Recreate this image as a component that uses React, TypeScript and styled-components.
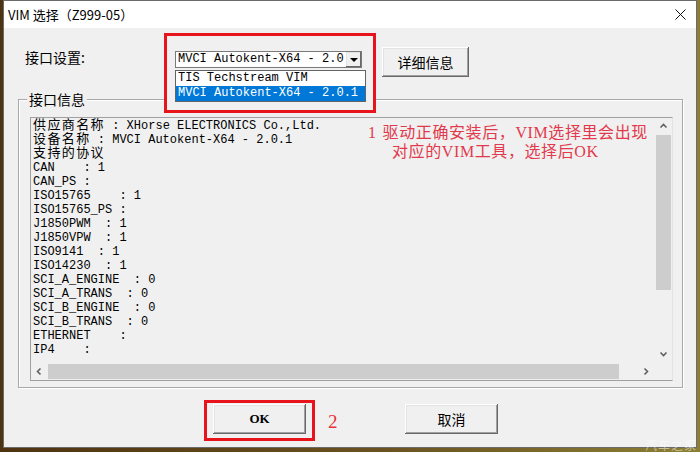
import React from "react";
import styled, { createGlobalStyle } from "styled-components";

const UI = `"Noto Sans CJK SC", "Liberation Sans", sans-serif`;
const MONO = `"Liberation Mono", "Noto Sans CJK SC", monospace`;
const NOTE = `"Liberation Serif", "Noto Sans CJK SC", serif`;

const GlobalStyle = createGlobalStyle`
  html, body {
    margin: 0;
    padding: 0;
  }
  body {
    width: 700px;
    height: 452px;
    overflow: hidden;
    font-family: ${UI};
  }
`;

const Desktop = styled.div`
  position: relative;
  width: 700px;
  height: 452px;
  box-sizing: border-box;
  padding: 0 3px 4px 3px;
  background: linear-gradient(90deg, #4e3310 0%, #6a5220 55%, #8c7f34 100%);
`;

const Window = styled.div`
  width: 694px;
  height: 448px;
  box-sizing: border-box;
  border: 1px solid #6b6b6b;
  background: #f0f0f0;
  display: flex;
  flex-direction: column;
`;

const TitleBar = styled.div`
  height: 27px;
  flex: none;
  background: #fff;
  display: flex;
  align-items: center;
  justify-content: space-between;
  padding: 0 10px 0 4px;
`;

const Title = styled.span`
  font-size: 13px;
  color: #000;
`;

const TopRow = styled.div`
  height: 62px;
  display: flex;
  align-items: flex-start;
  padding-left: 21px;
`;

const FieldLabel = styled.span`
  width: 150px;
  margin-top: 20px;
  font-size: 14px;
  line-height: 18px;
  color: #000;
`;

const ComboArea = styled.div`
  position: relative;
  z-index: 2;
  width: 187px;
  height: 17px;
  margin-top: 23px;
`;

const RedFrame = styled.div<{ $fill?: boolean }>`
  position: absolute;
  border: 3px solid #e8141c;
  box-sizing: border-box;
  background: ${({ $fill }) => ($fill ? "#f0f0f0" : "transparent")};
  z-index: 0;
`;

const Combo = styled.div`
  position: relative;
  z-index: 1;
  height: 17px;
  box-sizing: border-box;
  border: 1px solid #7a7a7a;
  background: #fff;
  display: flex;
`;

const ComboText = styled.span`
  flex: 1;
  overflow: hidden;
  white-space: pre;
  font-family: ${MONO};
  font-size: 12px;
  line-height: 15px;
  padding-left: 2px;
  color: #000;
`;

const ArrowBtn = styled.span`
  width: 15px;
  flex: none;
  background: #f0f0f0;
  box-shadow: inset -1px -1px 0 #696969, inset 1px 1px 0 #e3e3e3;
  display: flex;
  align-items: center;
  justify-content: center;
  &::after {
    content: "";
    border-left: 4px solid transparent;
    border-right: 4px solid transparent;
    border-top: 4px solid #000;
  }
`;

const DropList = styled.div`
  position: absolute;
  z-index: 1;
  top: 19px;
  left: 0;
  width: 191px;
  box-sizing: border-box;
  border: 1px solid #646464;
  background: #fff;
`;

const ListItem = styled.div<{ $selected?: boolean }>`
  height: 15px;
  line-height: 15px;
  padding-left: 2px;
  white-space: pre;
  font-family: ${MONO};
  font-size: 12px;
  color: ${({ $selected }) => ($selected ? "#fff" : "#000")};
  background: ${({ $selected }) => ($selected ? "#0078d7" : "#fff")};
`;

const Button = styled.button<{ $serif?: boolean }>`
  width: 93px;
  height: 30px;
  padding: 0;
  border: none;
  background: #f0f0f0;
  box-shadow: inset -1px -1px 0 #696969, inset 1px 1px 0 #ffffff,
    inset -2px -2px 0 #a0a0a0, inset 2px 2px 0 #e3e3e3;
  font-family: ${({ $serif }) => ($serif ? NOTE : UI)};
  font-size: ${({ $serif }) => ($serif ? "13px" : "14px")};
  font-weight: ${({ $serif }) => ($serif ? 700 : 400)};
  color: #000;
`;

const DetailButton = styled(Button)`
  width: 87px;
  margin-left: 20px;
  margin-top: 19px;
`;

const Group = styled.div`
  position: relative;
  margin: 9px 0 0 14px;
  width: 665px;
  height: 289px;
  box-sizing: border-box;
  border: 1px solid #a8a8a8;
  box-shadow: inset 1px 1px 0 #fff, 1px 1px 0 #fff;
  padding: 17px 9px 0 11px;
`;

const Legend = styled.span`
  position: absolute;
  top: -10px;
  left: 8px;
  padding: 0 2px;
  background: #f0f0f0;
  font-size: 14px;
  line-height: 18px;
  color: #000;
`;

const InfoBox = styled.div`
  width: 643px;
  height: 264px;
  box-sizing: border-box;
  border: 1px solid #a0a0a0;
  border-right-color: #e3e3e3;
  display: grid;
  grid-template-columns: 1fr 17px;
  grid-template-rows: 1fr 17px;
`;

const TextPane = styled.div`
  position: relative;
  overflow: hidden;
  padding: 1px 0 0 2px;
  font-family: ${MONO};
  font-size: 12px;
  color: #000;
`;

const Line = styled.div`
  height: 14px;
  line-height: 14px;
  white-space: pre;
`;

const Han = styled.span`
  font-size: 13px;
  letter-spacing: 1.4px;
  line-height: 14px;
`;

const Note = styled.div`
  position: absolute;
  left: 337px;
  top: 5px;
  font-family: ${NOTE};
  font-size: 16px;
  line-height: 19px;
  letter-spacing: 0.6px;
  color: #e23a4c;
  white-space: pre;
`;

const NoteLine = styled.div<{ $indent: number }>`
  padding-left: ${({ $indent }) => $indent}px;
`;

const NoteNum = styled.span`
  margin-right: 6px;
`;

const VScroll = styled.div`
  display: flex;
  flex-direction: column;
  background: #f0f0f0;
`;

const HScroll = styled.div`
  display: flex;
  background: #f0f0f0;
`;

const ScrollBtn = styled.span`
  width: 17px;
  height: 17px;
  flex: none;
  display: flex;
  align-items: center;
  justify-content: center;
`;

const Thumb = styled.span<{ $size: number; $vertical?: boolean }>`
  flex: none;
  background: #cdcdcd;
  ${({ $vertical, $size }) =>
    $vertical
      ? `height: ${$size}px; margin: 0 1px;`
      : `width: ${$size}px; margin: 1px 0;`}
`;

const Track = styled.span`
  flex: 1;
`;

const Corner = styled.div`
  background: #f0f0f0;
`;

const BottomRow = styled.div`
  display: flex;
  align-items: flex-start;
  margin-top: 16px;
  padding-left: 209px;
`;

const OkWrap = styled.div`
  position: relative;
`;

const StepNum = styled.span`
  position: absolute;
  left: 115px;
  top: 7px;
  font-family: ${NOTE};
  font-size: 19px;
  line-height: 22px;
  color: #e8303a;
`;

const CancelButton = styled(Button)`
  margin-left: 99px;
`;

const Watermark = styled.span`
  position: absolute;
  right: 3px;
  bottom: 0;
  font-size: 12px;
  line-height: 15px;
  letter-spacing: 1px;
  color: rgba(255, 255, 255, 0.5);
`;

const infoLines = [
  "供应商名称 : XHorse ELECTRONICS Co.,Ltd.",
  "设备名称 : MVCI Autokent-X64 - 2.0.1",
  "支持的协议",
  "CAN    : 1",
  "CAN_PS :",
  "ISO15765    : 1",
  "ISO15765_PS :",
  "J1850PWM  : 1",
  "J1850VPW  : 1",
  "ISO9141  : 1",
  "ISO14230  : 1",
  "SCI_A_ENGINE  : 0",
  "SCI_A_TRANS  : 0",
  "SCI_B_ENGINE  : 0",
  "SCI_B_TRANS  : 0",
  "ETHERNET    :",
  "IP4    :",
];

// CJK runs get their own span so each glyph spans two mono columns
function MonoLine({ text }: { text: string }) {
  const parts = text.split(/([\u3000-\u9fff\uff00-\uffef]+)/);
  return (
    <Line>
      {parts.map((p, i) =>
        /[\u3000-\u9fff]/.test(p) ? <Han key={i}>{p}</Han> : p,
      )}
    </Line>
  );
}

function Chevron({ dir }: { dir: "up" | "down" | "left" | "right" }) {
  const d = {
    up: "M1.5 5.5 L4.5 2.5 L7.5 5.5",
    down: "M1.5 2.5 L4.5 5.5 L7.5 2.5",
    left: "M5.5 1.5 L2.5 4.5 L5.5 7.5",
    right: "M2.5 1.5 L5.5 4.5 L2.5 7.5",
  }[dir];
  return (
    <svg width="9" height="9" viewBox="0 0 9 9">
      <path d={d} fill="none" stroke="#606060" strokeWidth="1.6" />
    </svg>
  );
}

export default function App() {
  return (
    <>
      <GlobalStyle />
      <Desktop>
        <Window>
          <TitleBar>
            <Title>VIM 选择（Z999-05）</Title>
            <svg width="11" height="11" viewBox="0 0 11 11">
              <path d="M0.5 0.5 L10.5 10.5 M10.5 0.5 L0.5 10.5" stroke="#111" strokeWidth="1" />
            </svg>
          </TitleBar>

          <TopRow>
            <FieldLabel>接口设置:</FieldLabel>
            <ComboArea>
              <RedFrame $fill style={{ left: -11, top: -18, width: 212, height: 80 }} />
              <Combo>
                <ComboText>MVCI Autokent-X64 - 2.0</ComboText>
                <ArrowBtn />
              </Combo>
              <DropList>
                <ListItem>TIS Techstream VIM</ListItem>
                <ListItem $selected>MVCI Autokent-X64 - 2.0.1</ListItem>
              </DropList>
            </ComboArea>
            <DetailButton>详细信息</DetailButton>
          </TopRow>

          <Group>
            <Legend>接口信息</Legend>
            <InfoBox>
              <TextPane>
                {infoLines.map((l, i) => (
                  <MonoLine key={i} text={l} />
                ))}
                <Note>
                  <NoteLine $indent={0}>
                    <NoteNum>1</NoteNum>驱动正确安装后，VIM选择里会出现
                  </NoteLine>
                  <NoteLine $indent={24}>对应的VIM工具，选择后OK</NoteLine>
                </Note>
              </TextPane>
              <VScroll>
                <ScrollBtn>
                  <Chevron dir="up" />
                </ScrollBtn>
                <Thumb $vertical $size={155} />
                <Track />
                <ScrollBtn>
                  <Chevron dir="down" />
                </ScrollBtn>
              </VScroll>
              <HScroll>
                <ScrollBtn>
                  <Chevron dir="left" />
                </ScrollBtn>
                <Thumb $size={571} />
                <Track />
                <ScrollBtn>
                  <Chevron dir="right" />
                </ScrollBtn>
              </HScroll>
              <Corner />
            </InfoBox>
          </Group>

          <BottomRow>
            <OkWrap>
              <RedFrame style={{ left: -9, top: -4, right: -9, bottom: -7 }} />
              <Button $serif>OK</Button>
              <StepNum>2</StepNum>
            </OkWrap>
            <CancelButton>取消</CancelButton>
          </BottomRow>
        </Window>
        <Watermark>汽车之家</Watermark>
      </Desktop>
    </>
  );
}
